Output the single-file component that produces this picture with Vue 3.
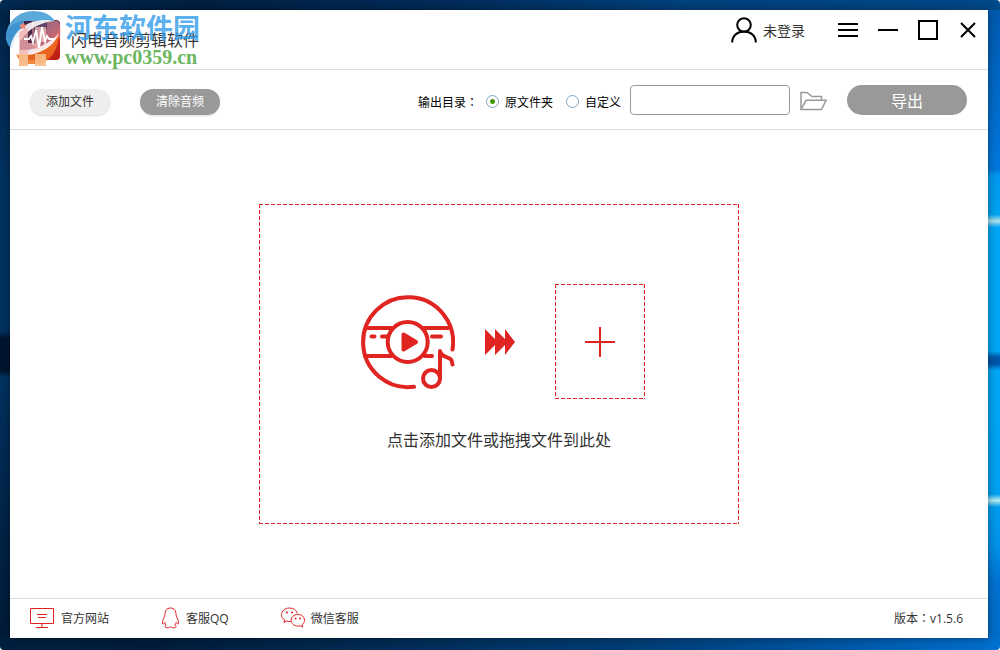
<template>
  <div class="desktop">
    <div class="window">
      <header class="titlebar">
        <svg class="logo" viewBox="0 0 40 40" aria-hidden="true">
          <defs>
            <linearGradient id="logoFill" x1="0" y1="0" x2="1" y2="1">
              <stop offset="0" stop-color="#2c2447" />
              <stop offset="0.5" stop-color="#6a2a48" />
              <stop offset="0.72" stop-color="#cf2a22" />
              <stop offset="1" stop-color="#b8190f" />
            </linearGradient>
          </defs>
          <rect width="40" height="40" rx="4" fill="url(#logoFill)" />
        </svg>
        <h1 class="title">闪电音频剪辑软件</h1>

        <button type="button" class="account">
          <svg width="26" height="26" viewBox="0 0 26 26" fill="none" stroke="#000" stroke-width="2">
            <circle cx="13" cy="8" r="6.8" />
            <path d="M1.2 25.500c0-7 5.300-11 11.800-11s11.800 4 11.800 11" />
          </svg>
          <span>未登录</span>
        </button>
        <div class="controls">
          <button v-for="c in controls" :key="c.label" type="button" :aria-label="c.label">
            <svg width="20" height="20" viewBox="0 0 20 20" fill="none" stroke="#000" stroke-width="2">
              <path :d="c.path" />
            </svg>
          </button>
        </div>

        <div class="watermark">
          <svg width="58" height="58" viewBox="0 0 58 58" aria-hidden="true">
            <path d="M2 30C1 12 15 1 29 1c11 0 18 4 22 10H20c-6 0-5 3-5 8v9z" fill="#5aa9da" />
            <path d="M2 26c0 6 2 10 6 13 3-12 7-17 12-22v-6C10 12 3 17 2 26z" fill="#3f93cf" />
            <path d="M28 11h26c3 5 3 11 2 17L34 38l-6-2z" fill="#e59aa6" opacity="0.55" />
            <path d="M30 11h13v8l-8 3v12h-5z" fill="#3d3560" opacity="0.7" />
            <path d="M12 43c17 2 36-6 43-20 0 16-8 27-19 31H20c-4-3-7-6-8-11z" fill="#f0701e" opacity="0.85" />
            <path d="M6 39C8 22 24 6 50 11 30 13 16 26 13 40c16 1 32-5 42-17-5 15-23 24-41 22-4-1-7-3-8-6z" fill="#fff" opacity="0.88" />
            <path d="M15 22l9-4v15h7V17h11v15h-7v7h-11v17h-9z" fill="#f5b3b0" opacity="0.75" />
            <path d="M15 44h9v12h-9zM31 44h11v12H31z" fill="#f9bd8a" opacity="0.9" />
            <path d="M19 12l1.200 2.500 2.800.4-2 1.900.5 2.700-2.500-1.300-2.500 1.300.5-2.700-2-1.900 2.800-.4z" fill="#f4837a" />
            <path d="M20 29h5l2-3 2 6 3-12 3 18 3-21 3 15 2-6 2 3h5" fill="none" stroke="#fff" stroke-width="1.800" />
          </svg>
          <div class="watermark-text">
            <span class="site-name">河东软件园</span>
            <span class="site-url">www.pc0359.cn</span>
          </div>
        </div>
      </header>

      <div class="toolbar">
        <button type="button" class="pill pill-light">添加文件</button>
        <button type="button" class="pill pill-dark">清除音频</button>
        <div class="output">
          <div class="target" role="radiogroup" aria-labelledby="outputLabel">
            <span id="outputLabel">输出目录<span class="colon">：</span></span>
            <label><input v-model="target" type="radio" name="target" value="source" />原文件夹</label>
            <label><input v-model="target" type="radio" name="target" value="custom" />自定义</label>
          </div>
          <input v-model="folder" class="path" type="text" aria-label="输出目录" />
          <button type="button" class="folder" aria-label="选择文件夹">
            <svg width="27" height="20" viewBox="0 0 27 20" fill="none" stroke="#999" stroke-width="1.500">
              <path d="M1 18.500V1.500h6l5 4h9.500v3.800M1 18.500L6 9.300h20l-4.500 9.200z" />
            </svg>
          </button>
        </div>
        <button type="button" class="export">导出</button>
      </div>

      <main class="content">
        <div class="dropzone dashed" @dragover.prevent @drop.prevent>
          <div class="steps">
            <svg width="102" height="96" viewBox="0 -1 102 96" fill="none" stroke="#e02421" stroke-width="4" stroke-linecap="round" stroke-linejoin="round">
              <path d="M99.500 54.500A45 45 0 1 0 61 91.800" />
              <path d="M14 33h24M71 33h24M12 61h27M72 61h7M18.500 41.500h3M29 41.500h6M79 41.500h9" />
              <circle cx="54.700" cy="47" r="20" />
              <path d="M50.500 39.500v15l12.500-7.500z" fill="#e02421" />
              <circle cx="78.500" cy="83.500" r="8.500" />
              <path d="M87 83V56c2 9 12 3 12.500 13.500" />
            </svg>
            <svg class="arrows" width="30" height="26" viewBox="0 0 30 26" fill="#e02421">
              <path d="M0 0l10 10V0l10 10V0l10 13-10 13V16L10 26V16L0 26z" />
            </svg>
            <button type="button" class="add dashed" aria-label="添加文件">
              <svg width="30" height="30" viewBox="0 0 30 30" stroke="#e02421" stroke-width="2">
                <path d="M15 0v30M0 15h30" />
              </svg>
            </button>
          </div>
          <p>点击添加文件或拖拽文件到此处</p>
        </div>
      </main>

      <footer class="footer">
        <a href="#">
          <svg width="25" height="22" viewBox="0 0 25 22" fill="none" stroke="#e02421">
            <path d="M.5 1.500h23v15H.5zM7 7.500h10M8 10.500h8M12 16.500v4M6 20.500h12" />
          </svg>
          官方网站
        </a>
        <a href="#">
          <svg width="19" height="22" viewBox="0 0 19 22" fill="none" stroke="#e02421">
            <path d="M9.500 1C5.500 1 4 4 4 7.500c0 2-2.500 5-2.500 8.500 0 1.500.8 1.500 2.300-.5.2 1.200.7 2 1.400 2.700-2 .8-1.700 2.600.8 2.600 1.700 0 2.700-.4 3.500-1.200.8.800 1.800 1.200 3.500 1.200 2.500 0 2.800-1.800.8-2.600.7-.7 1.200-1.500 1.400-2.700 1.500 2 2.300 2 2.300.5 0-3.500-2.500-6.500-2.500-8.500C15 4 13.500 1 9.500 1z" />
          </svg>
          客服QQ
        </a>
        <a href="#">
          <svg width="24" height="22" viewBox="0 0 24 22" fill="none" stroke="#e02421">
            <path d="M10 14.500c-1.500.2-3 0-4.300-.5L3 15.500l.6-2.700C1.500 11.500.5 9.700.5 7.700.5 4 4 1 8.500 1c4 0 7.200 2.200 7.900 5.500" />
            <path d="M16.800 7.500c3.800 0 6.700 2.500 6.700 5.700 0 1.800-.9 3.400-2.400 4.500l.5 2.300-2.300-1.200c-.8.200-1.600.3-2.500.3-3.700 0-6.700-2.600-6.700-5.900s3-5.700 6.700-5.700z" />
            <g fill="#e02421" stroke="none">
              <circle cx="6" cy="5.500" r="1" /><circle cx="11" cy="5.500" r="1" />
              <circle cx="14.500" cy="11.500" r="1" /><circle cx="19" cy="11.500" r="1" />
            </g>
          </svg>
          微信客服
        </a>
        <span class="version">版本<span class="colon">：</span>v1.5.6</span>
      </footer>
    </div>
  </div>
</template>

<script setup>
import { ref } from 'vue'

const target = ref('source')
const folder = ref('')

const controls = [
  { label: '菜单', path: 'M0 4h20M0 10h20M0 16h20' },
  { label: '最小化', path: 'M0 10h20' },
  { label: '最大化', path: 'M1 1h18v18H1z' },
  { label: '关闭', path: 'M3 3l14 14M17 3L3 17' }
]
</script>

<style>
body {
  margin: 0;
  background: #fff;
}
</style>

<style scoped>
.desktop {
  box-sizing: border-box;
  display: flex;
  min-height: 100vh;
  padding: 10px 12px 12px 10px;
  border-radius: 4px;
  overflow: hidden;
  font-family: "Open Sans", "Noto Sans CJK SC", sans-serif;
  font-size: 12px;
  color: #333;
  background:
    linear-gradient(90deg, #002a50, #001f42 20%, #002c5a 45%, #00417c 68%, #00498a) top / 100% 10px no-repeat,
    linear-gradient(90deg, #00203f, #001c3a 15%, #002c55 40%, #003f78 65%, #0058a8 85%, #0070d0) bottom / 100% 12px no-repeat,
    linear-gradient(#002448, #003260 28%, #003260 51%, #001530 52%, #001530 57%, #003260 58%, #002448 80%, #001a38) left / 10px 100% no-repeat,
    linear-gradient(#0058ac, #0077dd 26%, #0097ee 27%, #00a2f0 33%, #b5e2ee 34%, #00a6f6 35%, #00a6f6 54%, #0055a8 55%, #0055a8 56%, #00a6f6 57%, #00a0f2 76%, #b8eef0 77%, #009cf0 78%, #0090e8 84%, #0070cf 90%, #006cc8) right / 12px 100% no-repeat,
    #003a70;
}

.window {
  flex: 1;
  display: flex;
  flex-direction: column;
  background: #fff;
  box-shadow: 0 0 8px rgba(0, 0, 0, 0.45);
}

button {
  padding: 0;
  border: 0;
  background: none;
  font-family: inherit;
  color: inherit;
  cursor: pointer;
}

svg {
  display: block;
  flex: none;
}

/* the TC face centres the full-width colon in its cell */
.colon {
  font-family: "Noto Sans CJK TC", sans-serif;
  line-height: 1;
}

.titlebar {
  position: relative;
  display: flex;
  align-items: flex-start;
  box-sizing: border-box;
  height: 60px;
  padding: 0 10px;
  border-bottom: 1px solid #dcdcdc;
}

.logo {
  width: 40px;
  height: 40px;
  margin-top: 10px;
}

.title {
  margin: 0 auto 0 11px;
  font-size: 16px;
  font-weight: 400;
  line-height: 60px;
}

.account {
  display: flex;
  align-items: center;
  gap: 6px;
  height: 40px;
  margin-right: 33px;
  font-size: 14px;
}

.controls {
  display: flex;
  align-items: center;
  gap: 20px;
  height: 40px;
}

.watermark {
  position: absolute;
  top: 0;
  left: -6px;
  display: flex;
  gap: 3px;
  pointer-events: none;
}

.watermark-text {
  display: flex;
  flex-direction: column;
  font-family: "Liberation Serif", "Noto Sans CJK SC", serif;
  font-weight: 700;
}

.site-name {
  font-size: 27px;
  line-height: 38px;
  color: rgba(48, 154, 234, 0.8);
}

.site-url {
  font-size: 20px;
  line-height: 18px;
  color: #6cb65f;
}

.toolbar {
  display: flex;
  align-items: center;
  box-sizing: border-box;
  height: 60px;
  padding: 0 21px 0 20px;
  border-bottom: 1px solid #dcdcdc;
}

.pill {
  width: 80px;
  height: 26px;
  margin: 4px 30px 0 0;
  border-radius: 13px;
  font-size: 12px;
  line-height: 24px;
  box-shadow: 0 1px 2px rgba(0, 0, 0, 0.15);
}

.pill-light {
  background: #eee;
}

.pill-dark {
  background: #999;
  color: #fff;
}

.output {
  display: flex;
  align-items: center;
  margin-left: auto;
  color: #000;
}

.target {
  display: flex;
  align-items: center;
  padding-top: 4px;
}

.target label {
  display: flex;
  align-items: center;
  gap: 6px;
  margin: 0 5px 0 8px;
}

.target label:last-child {
  margin-right: 9px;
}

.target input {
  appearance: none;
  box-sizing: border-box;
  width: 13px;
  height: 13px;
  margin: 0;
  border: 1px solid #7ba6c2;
  border-radius: 50%;
  background: #fff;
}

.target input:checked {
  background: radial-gradient(circle, #3f9a00 2px, #fff 3px);
}

.path {
  box-sizing: border-box;
  width: 160px;
  height: 30px;
  padding: 0 8px;
  border: 1px solid #999;
  border-radius: 4px;
  font: inherit;
}

.folder {
  margin: 2px 20px 0 10px;
}

.export {
  width: 120px;
  height: 30px;
  border-radius: 15px;
  background: #999;
  color: #fff;
  font-size: 16px;
}

.content {
  flex: 1;
  display: flex;
  align-items: center;
  justify-content: center;
}

/* 4px dash, 2px gap */
.dashed {
  background:
    repeating-linear-gradient(90deg, #e02421 0 4px, transparent 4px 6px) top / 100% 1px no-repeat,
    repeating-linear-gradient(90deg, #e02421 0 4px, transparent 4px 6px) bottom / 100% 1px no-repeat,
    repeating-linear-gradient(#e02421 0 4px, transparent 4px 6px) left / 1px 100% no-repeat,
    repeating-linear-gradient(#e02421 0 4px, transparent 4px 6px) right / 1px 100% no-repeat;
}

.dropzone {
  display: flex;
  flex-direction: column;
  align-items: center;
  box-sizing: border-box;
  width: 480px;
  height: 320px;
  padding-top: 80px;
}

.steps {
  display: flex;
  align-items: center;
}

.arrows {
  margin: 0 40px 0 30px;
}

.add {
  display: flex;
  align-items: center;
  justify-content: center;
  width: 90px;
  height: 115px;
}

.dropzone p {
  margin: 29px 0 0;
  font-size: 16px;
  line-height: 24px;
}

.footer {
  display: flex;
  align-items: center;
  gap: 52px;
  box-sizing: border-box;
  height: 40px;
  padding: 0 25px 2px 20px;
  border-top: 1px solid #dcdcdc;
}

.footer a {
  display: flex;
  align-items: center;
  gap: 6px;
  color: inherit;
  text-decoration: none;
}

.version {
  margin-left: auto;
}
</style>
